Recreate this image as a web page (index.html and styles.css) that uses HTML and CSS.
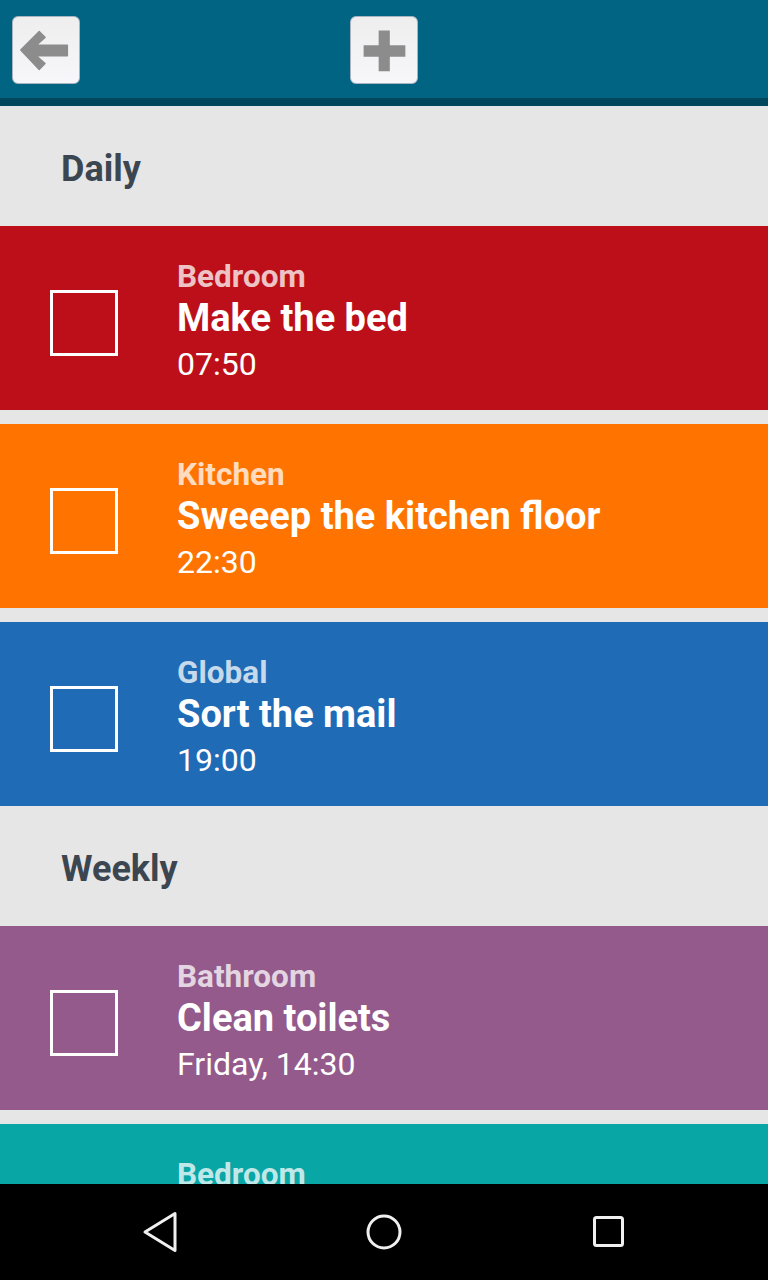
FILE: index.html
```html
<!DOCTYPE html>
<html>
<head>
<meta charset="utf-8">
<link rel="stylesheet" href="styles.css">
</head>
<body>
<div class="screen">
  <header class="topbar">
    <button class="tbtn" aria-label="Back">
      <svg width="68" height="68" viewBox="0 0 68 68"><path d="M8 34 L27 15 L33 21 L24 29 L56 29 L56 40 L24 40 L33 48 L27 54 Z" fill="#8c8c8c" stroke="#8c8c8c" stroke-width="1.5" stroke-linejoin="round"/></svg>
    </button>
    <button class="tbtn" aria-label="Add">
      <svg width="68" height="68" viewBox="0 0 68 68"><path d="M28.5 14 H40 V29 H56 V41 H40 V56 H28.5 V41 H13 V29 H28.5 Z" fill="#8c8c8c"/></svg>
    </button>
  </header>
  <main class="list">
    <div class="section">Daily</div>
    <div class="task red">
      <div class="check"></div>
      <div class="info">
        <div class="cat">Bedroom</div>
        <div class="title">Make the bed</div>
        <div class="time">07:50</div>
      </div>
    </div>
    <div class="task orange">
      <div class="check"></div>
      <div class="info">
        <div class="cat">Kitchen</div>
        <div class="title">Sweeep the kitchen floor</div>
        <div class="time">22:30</div>
      </div>
    </div>
    <div class="task blue">
      <div class="check"></div>
      <div class="info">
        <div class="cat">Global</div>
        <div class="title">Sort the mail</div>
        <div class="time">19:00</div>
      </div>
    </div>
    <div class="section">Weekly</div>
    <div class="task purple">
      <div class="check"></div>
      <div class="info">
        <div class="cat">Bathroom</div>
        <div class="title">Clean toilets</div>
        <div class="time">Friday, 14:30</div>
      </div>
    </div>
    <div class="task teal">
      <div class="check"></div>
      <div class="info">
        <div class="cat">Bedroom</div>
      </div>
    </div>
  </main>
  <nav class="navbar">
    <svg width="40" height="44" viewBox="0 0 40 44"><path d="M35 3.5 L35 40.5 L5 22 Z" fill="none" stroke="#f0f0f0" stroke-width="3" stroke-linejoin="round"/></svg>
    <svg width="40" height="44" viewBox="0 0 40 44"><circle cx="20" cy="22" r="16" fill="none" stroke="#f0f0f0" stroke-width="3"/></svg>
    <svg width="40" height="44" viewBox="0 0 40 44"><rect x="6.5" y="7.5" width="28" height="28" rx="2" fill="none" stroke="#f0f0f0" stroke-width="3"/></svg>
  </nav>
</div>
</body>
</html>
```

FILE: styles.css
```css
* { box-sizing: border-box; }
html, body { margin: 0; padding: 0; }
body {
  font-family: Roboto, "Liberation Sans", sans-serif;
  background: #e6e6e6;
}
.screen {
  width: 768px;
  height: 1280px;
  display: flex;
  flex-direction: column;
  overflow: hidden;
}
.topbar {
  flex: none;
  height: 106px;
  background: #006482;
  border-bottom: 8px solid #00475e;
  display: flex;
  align-items: flex-start;
  gap: 270px;
  padding: 16px 12px 0;
}
.tbtn {
  width: 68px;
  height: 68px;
  padding: 0;
  margin: 0;
  border: 1px solid #aab4c0;
  border-radius: 6px;
  background: linear-gradient(#eeeeee, #f7f7fb);
  display: flex;
  align-items: center;
  justify-content: center;
}
.tbtn svg { display: block; }
.list {
  flex: 1;
  overflow: hidden;
  display: flex;
  flex-direction: column;
}
.section {
  flex: none;
  height: 120px;
  padding: 6px 0 0 61px;
  font-size: 36px;
  line-height: 114px;
  font-weight: bold;
  color: #3c4650;
}
.task + .task { margin-top: 14px; }
.task {
  flex: none;
  height: 184px;
  display: flex;
  align-items: center;
  padding: 32px 0 22px 50px;
  color: #fff;
}
.check {
  width: 68px;
  height: 66px;
  border: 3px solid #fff;
  flex: none;
  margin-right: 59px;
}
.info {
  display: flex;
  flex-direction: column;
  min-height: 130px;
}
.cat {
  font-size: 31.5px;
  line-height: 38px;
  font-weight: bold;
  color: rgba(255,255,255,0.75);
}
.title {
  font-size: 38px;
  line-height: 44px;
  font-weight: bold;
}
.time {
  font-size: 32px;
  line-height: 48px;
}
.red { background: #bd0f19; }
.orange { background: #ff7400; }
.blue { background: #206bb6; }
.purple { background: #935a8b; }
.teal { background: #09a6a6; }
.navbar {
  flex: none;
  height: 96px;
  background: #000;
  display: flex;
  align-items: center;
  justify-content: space-between;
  padding: 0 140px;
}
.navbar svg { display: block; }
```
